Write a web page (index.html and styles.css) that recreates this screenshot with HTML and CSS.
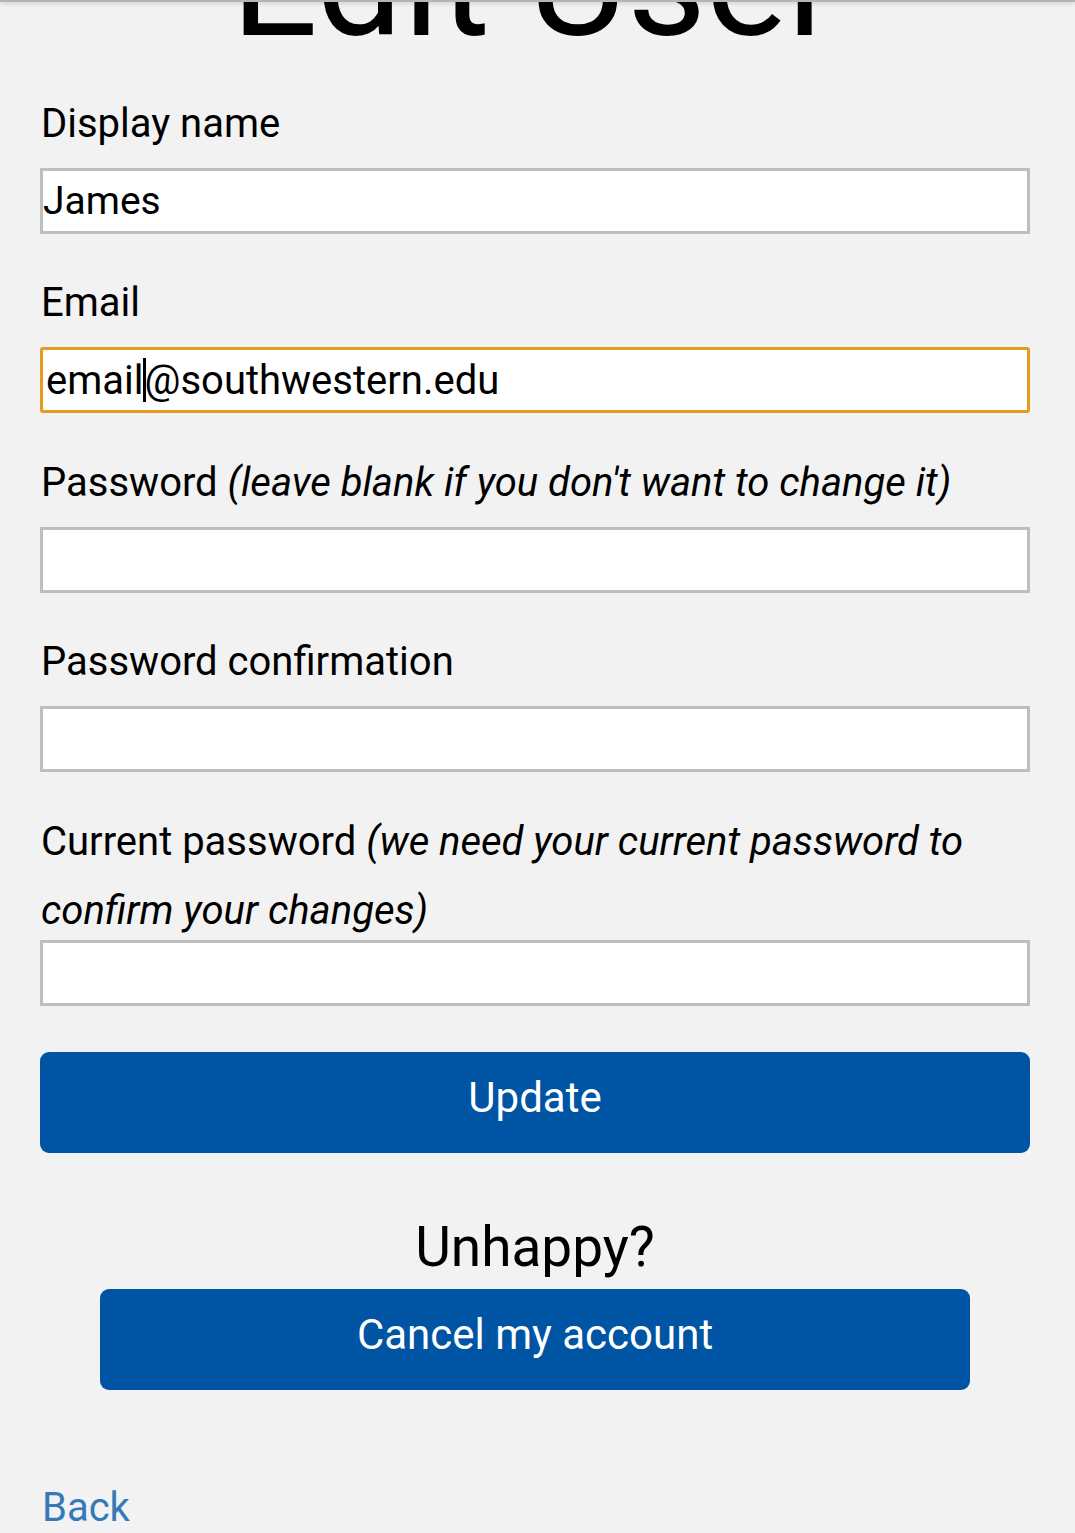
FILE: index.html
```html
<!DOCTYPE html>
<html lang="en">
<head>
<meta charset="utf-8">
<title>Edit User</title>
<link rel="stylesheet" href="styles.css">
</head>
<body>
<div class="topbar"></div>
<main class="page">
  <h1 class="title">Edit User</h1>
  <form class="form">
    <div class="field">
      <label class="label">Display name</label>
      <input class="input" type="text" value="James">
    </div>
    <div class="field">
      <label class="label">Email</label>
      <div class="input input-focus">email<span class="caret"></span>@southwestern.edu</div>
    </div>
    <div class="field">
      <label class="label">Password <i>(leave blank if you don't want to change it)</i></label>
      <input class="input" type="password">
    </div>
    <div class="field">
      <label class="label">Password confirmation</label>
      <input class="input" type="password">
    </div>
    <div class="field field-tight">
      <label class="label"><span class="line">Current password <i>(we need your current password to</i></span><span class="line"><i>confirm your changes)</i></span></label>
      <input class="input" type="password">
    </div>
    <button class="btn btn-full" type="button">Update</button>
  </form>
  <h3 class="subtitle">Unhappy?</h3>
  <div class="cancel-row">
    <button class="btn btn-cancel" type="button">Cancel my account</button>
  </div>
  <a class="back" href="#">Back</a>
</main>
</body>
</html>
```
FILE: styles.css
```css
html, body {
  margin: 0;
  padding: 0;
  background: #f2f2f2;
}
body {
  font-family: Roboto, "Liberation Sans", sans-serif;
  color: #000;
  overflow: hidden;
}
.topbar {
  position: fixed;
  top: 0;
  left: 0;
  right: 0;
  height: 2px;
  background: #b4b4b4;
  box-shadow: 0 1px 4px rgba(0, 0, 0, 0.25);
  z-index: 10;
}
.page {
  width: 990px;
  margin-left: 40px;
}
.title {
  font-size: 153px;
  font-weight: 400;
  line-height: 153px;
  text-align: center;
  margin: -94px 0 29.5px 0;
  height: 153px;
  white-space: nowrap;
}
.form {
  display: flex;
  flex-direction: column;
}
.field {
  display: flex;
  flex-direction: column;
  margin-bottom: 34.5px;
}
.label {
  font-size: 40px;
  line-height: 69px;
  margin-bottom: 10px;
  padding-left: 1px;
}
.field-tight .label {
  margin-bottom: -4.5px;
  display: flex;
  flex-direction: column;
}
.line {
  display: block;
  white-space: nowrap;
}
.label i {
  font-style: italic;
}
.input {
  box-sizing: border-box;
  height: 66px;
  width: 990px;
  border: 3px solid #bebebe;
  background: #fff;
  padding: 0;
  margin: 0;
  font-family: Roboto, "Liberation Sans", sans-serif;
  font-size: 39px;
  color: #000;
  outline: none;
  border-radius: 0;
}
div.input {
  display: flex;
  align-items: center;
  font-size: 40px;
}
.input-focus {
  border-color: #e59c1c;
  border-radius: 3px;
  padding-left: 3px;
}
.caret {
  display: inline-block;
  width: 3px;
  height: 44px;
  background: #000;
  margin: 0 -1px 0 -1px;
}
.btn {
  font-family: Roboto, "Liberation Sans", sans-serif;
  font-size: 42px;
  color: #fff;
  background: #0054a4;
  border: none;
  border-radius: 9px;
  height: 101px;
  cursor: pointer;
  padding: 0;
}
.btn-full {
  width: 990px;
  margin-top: 11.5px;
  padding-bottom: 10px;
}
.subtitle {
  font-size: 55px;
  font-weight: 400;
  line-height: 60px;
  text-align: center;
  margin: 64px 0 12px 0;
}
.cancel-row {
  display: flex;
  justify-content: center;
}
.btn-cancel {
  width: 870px;
  padding-bottom: 10px;
}
.back {
  display: block;
  margin-top: 83px;
  font-size: 40px;
  line-height: 69px;
  color: #337ab7;
  text-decoration: none;
  padding-left: 2px;
}
```
